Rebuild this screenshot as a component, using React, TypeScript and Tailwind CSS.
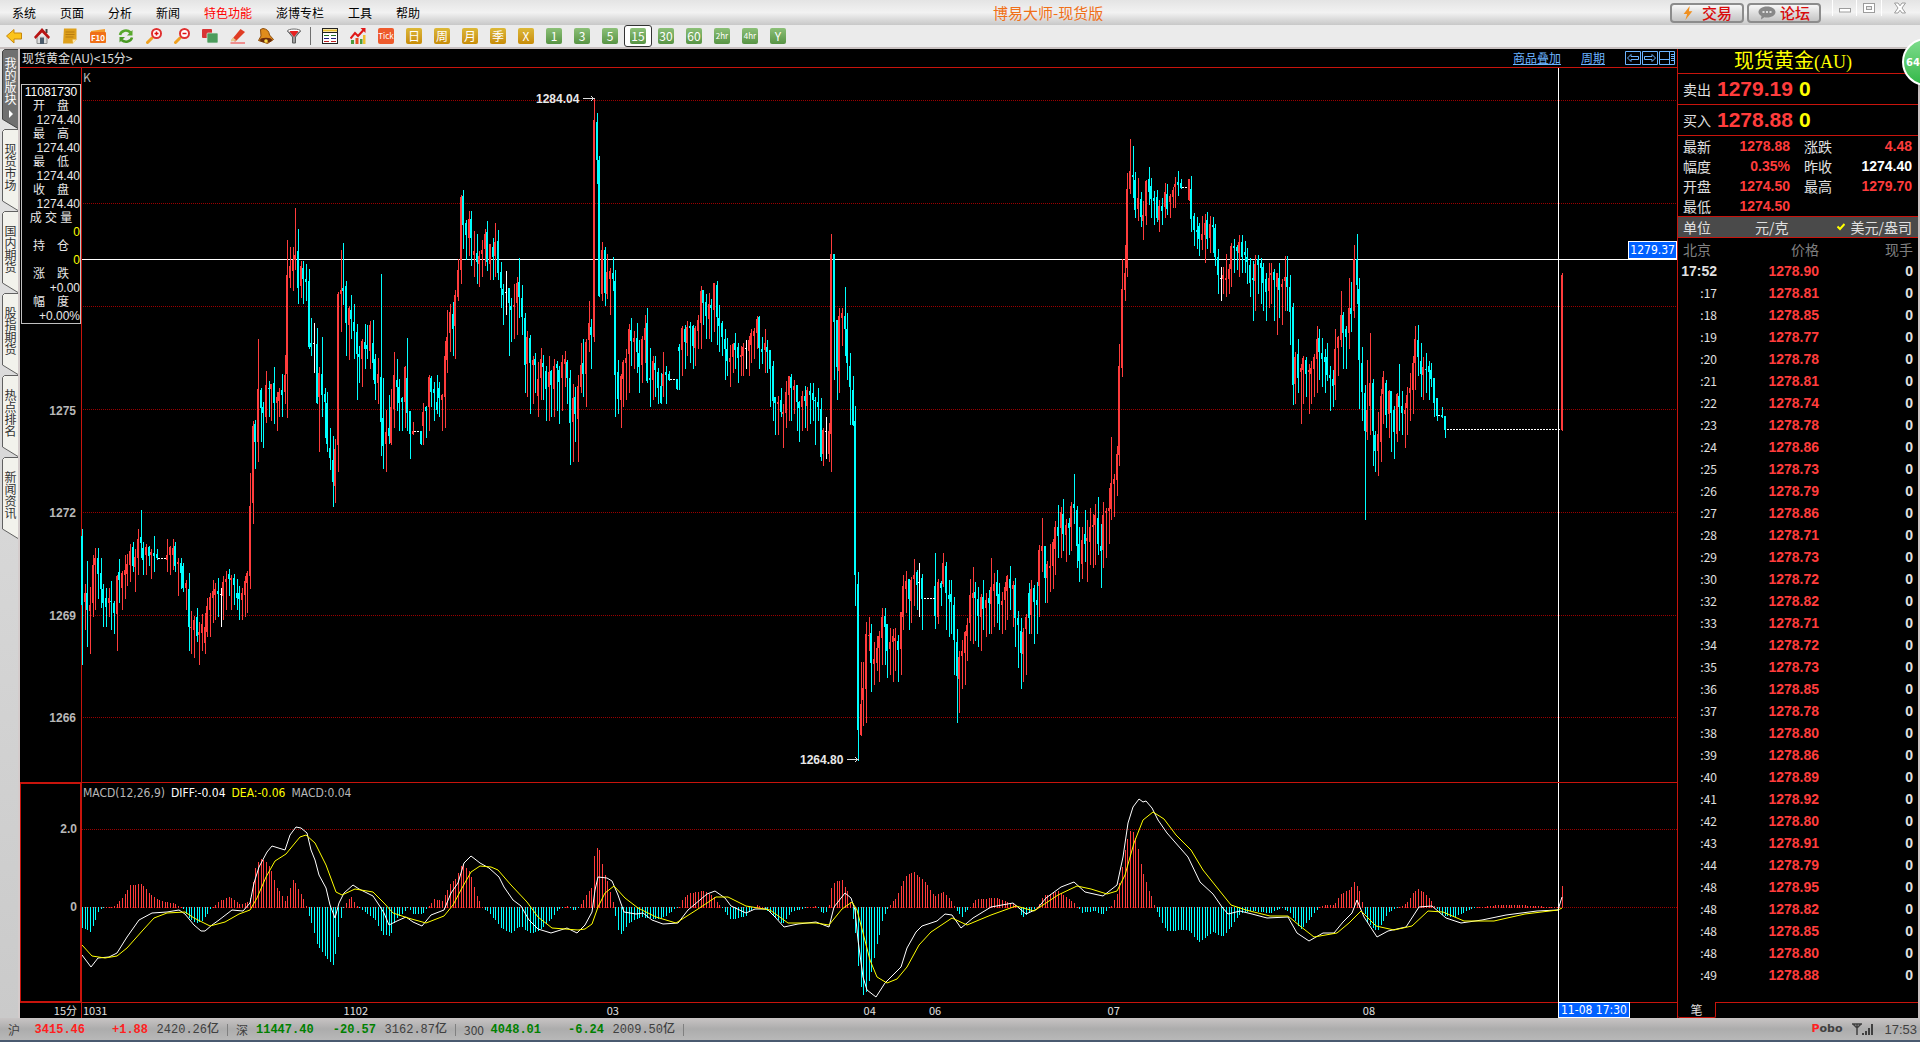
import type { ReactNode } from "react";
import clsx from "clsx";

const RED = "#ff3c3c";
const CYAN = "#00ffff";

const menus = ["系统", "页面", "分析", "新闻", "特色功能", "澎博专栏", "工具", "帮助"];

const sideTabs = ["我的版块", "现货市场", "国内期货", "股指期货", "热点排名", "新闻资讯"];

const periods = [
  { label: "Tick", tone: "red" },
  { label: "日", tone: "gold" },
  { label: "周", tone: "gold" },
  { label: "月", tone: "gold" },
  { label: "季", tone: "gold" },
  { label: "X", tone: "gold" },
  { label: "1", tone: "green" },
  { label: "3", tone: "green" },
  { label: "5", tone: "green" },
  { label: "15", tone: "green" },
  { label: "30", tone: "green" },
  { label: "60", tone: "green" },
  { label: "2hr", tone: "green" },
  { label: "4hr", tone: "green" },
  { label: "Y", tone: "green" },
];

const cursorInfo = [
  { label: "开　盘", value: "1274.40" },
  { label: "最　高", value: "1274.40" },
  { label: "最　低", value: "1274.40" },
  { label: "收　盘", value: "1274.40" },
  { label: "成 交 量", value: "0", yellow: true },
  { label: "持　仓", value: "0", yellow: true },
  { label: "涨　跌", value: "+0.00" },
  { label: "幅　度", value: "+0.00%" },
];

const ticks = [
  ["17:52", "1278.90"], [":17", "1278.81"], [":18", "1278.85"], [":19", "1278.77"],
  [":20", "1278.78"], [":21", "1278.81"], [":22", "1278.74"], [":23", "1278.78"],
  [":24", "1278.86"], [":25", "1278.73"], [":26", "1278.79"], [":27", "1278.86"],
  [":28", "1278.71"], [":29", "1278.73"], [":30", "1278.72"], [":32", "1278.82"],
  [":33", "1278.71"], [":34", "1278.72"], [":35", "1278.73"], [":36", "1278.85"],
  [":37", "1278.78"], [":38", "1278.80"], [":39", "1278.86"], [":40", "1278.89"],
  [":41", "1278.92"], [":42", "1278.80"], [":43", "1278.91"], [":44", "1278.79"],
  [":48", "1278.95"], [":48", "1278.82"], [":48", "1278.85"], [":48", "1278.80"],
  [":49", "1278.88"],
];

const indexes = [
  { name: "沪", price: "3415.46", change: "+1.88", amount: "2420.26亿", up: true },
  { name: "深", price: "11447.40", change: "-20.57", amount: "3162.87亿", up: false },
  { name: "300", price: "4048.01", change: "-6.24", amount: "2009.50亿", up: false },
];

// kind + x, high, body top, body bottom, low (r = up, d = down, w = flat)
const candleData = `
d82 529 536 605 664,r85 584 593 602 629,d87 561 593 610 646,r90 587 605 611 653,r93 555 565 603 616,r95 548 558 565 609,
d98 548 558 574 598,d101 558 573 589 607,d103 584 589 603 626,d106 588 598 607 626,r109 588 598 603 616,d111 581 601 602 629,
d114 601 603 613 633,r117 575 576 614 650,d119 559 572 580 602,r122 571 573 588 609,r125 555 570 575 598,r127 554 564 574 585,
r130 544 551 565 581,d133 542 547 566 571,r135 549 557 567 591,r138 529 539 558 574,d141 510 537 543 557,d143 542 548 560 574,
r146 544 547 555 574,d149 546 547 556 565,r151 549 552 555 578,d154 536 553 556 571,d157 549 554 558 559,r167 539 555 560 571,
r170 546 547 555 574,r173 539 548 555 569,d175 542 546 566 571,r178 558 562 564 595,d181 558 563 573 588,d183 563 566 588 591,
r186 580 583 588 609,d189 573 589 627 650,r191 611 627 628 653,r194 616 620 630 657,d197 608 617 636 641,r199 622 632 635 664,
r202 614 624 633 650,r205 613 627 643 653,r207 598 606 632 636,r210 593 597 610 636,r213 580 591 598 622,r215 583 589 595 619,
d218 578 591 594 616,w221 588 594 595 626,r223 576 582 596 619,r226 571 579 582 609,d229 569 574 579 595,r231 575 578 580 609,
d234 574 578 585 604,d237 579 593 598 609,d239 586 593 599 619,r242 588 593 600 619,r245 576 581 595 616,r247 571 573 583 612,
r250 473 506 576 588,r253 421 426 503 523,d255 420 424 442 468,r258 339 389 442 461,d261 388 390 408 441,d263 402 407 413 447,
r266 371 385 417 422,d269 381 388 389 416,r271 384 384 389 420,d274 367 383 403 423,r277 392 397 403 430,r279 388 392 401 416,
d282 374 390 395 416,r285 355 375 392 403,r287 240 275 374 417,r290 247 266 278 287,r293 247 260 271 290,r295 208 255 260 269,
d298 229 251 288 303,r301 261 266 286 297,d303 261 268 279 303,d306 264 279 282 300,d309 269 281 347 348,d311 318 343 347 355,
w314 323 343 344 372,d317 328 344 403 403,r319 367 373 397 451,d322 337 374 395 416,d325 388 394 402 437,d327 392 403 444 451,
d330 428 448 458 469,d333 436 460 482 506,r335 439 449 486 502,r338 292 294 445 471,r341 250 290 294 331,d343 243 288 291 304,
d346 281 286 323 355,r349 306 308 325 359,d351 295 310 319 338,d354 304 322 331 358,d357 324 332 354 399,d359 346 354 357 382,
r362 339 341 359 386,d365 324 342 349 368,d367 325 345 349 358,r370 321 325 351 368,d373 320 343 363 379,d375 354 359 384 399,
r378 358 374 383 403,d381 274 377 422 455,d383 378 418 446 468,r386 410 432 444 471,d389 395 428 436 443,r391 389 407 443 444,
r394 352 375 409 427,d397 359 380 387 410,d399 379 387 403 430,d402 397 398 402 430,r405 366 367 402 427,d407 338 378 413 430,
d410 411 411 434 458,r413 422 431 434 434,d421 431 431 444 444,r423 403 412 426 444,d426 406 407 411 437,r429 375 377 407 430,
d431 376 378 392 406,d434 382 389 393 420,d437 375 402 410 413,d439 382 388 398 416,r442 394 395 400 430,r445 341 356 397 427,
r447 310 337 360 372,r450 304 312 333 351,d453 302 314 329 355,r455 290 295 326 358,r458 259 270 297 300,r461 195 197 270 283,
d463 190 196 225 248,d466 220 223 235 259,r469 211 219 238 255,d471 211 219 238 265,r474 231 251 255 276,d477 234 253 262 283,
r479 251 256 264 286,r482 240 250 254 276,r485 229 234 249 265,d487 221 232 262 270,r490 244 244 264 279,d493 238 247 257 279,
r495 223 242 256 276,d498 230 241 273 279,d501 262 272 288 307,d503 284 289 295 324,w506 271 292 293 314,d509 288 288 303 355,
d511 298 306 310 341,r514 284 305 307 338,r517 277 283 303 334,d519 258 282 297 317,d522 285 298 317 334,d525 313 318 365 392,
r527 331 337 364 396,d530 335 338 363 413,r533 356 360 365 403,d535 353 359 365 392,r538 362 379 396 416,r541 348 359 378 399,
d543 355 363 367 399,d546 366 371 389 420,r549 356 372 387 420,d551 370 371 385 416,r554 359 366 389 416,d557 361 364 368 410,
d559 366 370 382 423,r562 355 362 378 410,r565 351 359 364 386,d567 360 362 378 403,d570 370 378 423 464,r573 384 398 422 461,
d575 387 397 414 441,r578 375 386 419 461,r581 343 365 387 392,d583 339 363 374 396,r586 339 342 374 406,r589 301 323 340 351,
d591 319 327 335 368,r594 98 120 337 341,d597 113 122 160 183,d599 156 160 296 296,r602 242 250 294 300,d605 247 250 293 305,
r607 254 272 294 298,r610 268 271 279 314,d613 257 273 279 290,d615 270 281 375 416,d618 360 372 399 413,r621 374 376 400 427,
r623 360 362 379 406,r626 349 358 363 399,r629 324 329 354 392,d631 318 330 341 365,r634 331 338 342 368,d637 323 338 352 372,
d639 340 353 367 392,r642 336 339 365 382,r645 315 328 340 362,d647 308 323 381 382,d650 348 378 380 406,r653 356 361 380 399,
d655 356 363 370 396,d658 368 372 388 403,d661 373 386 403 403,r663 352 374 386 396,d666 366 372 375 403,d669 371 374 380 380,
d677 379 379 389 389,d679 344 347 351 389,r682 326 328 350 375,d685 325 329 342 368,r687 321 327 343 355,d690 322 326 328 362,
d693 325 326 346 368,r695 326 328 348 365,r698 315 320 331 348,r701 286 291 323 348,d703 290 290 303 324,d706 294 302 316 338,
r709 293 304 319 338,d711 299 305 308 341,r714 283 283 310 331,d717 281 285 317 344,d719 305 318 326 351,d722 321 323 337 355,
d725 329 339 349 379,d727 338 349 361 375,r730 345 358 362 386,r733 343 344 357 372,d735 333 343 350 368,d738 343 347 358 382,
r741 346 355 357 375,r743 343 347 356 375,w746 340 348 349 368,r749 336 340 351 375,r751 329 333 345 362,r754 328 331 336 358,
r757 316 319 333 348,d759 316 317 348 368,d762 337 349 352 363,r765 329 343 350 372,d767 340 347 352 372,d770 350 350 369 406,
d773 361 366 401 420,d775 397 397 403 434,r778 396 402 404 434,d781 388 400 412 416,r783 404 412 414 447,r786 381 392 413 427,
r789 376 376 395 420,d791 374 377 388 420,r794 380 386 390 413,d797 385 385 402 430,d799 401 402 408 441,r802 391 396 407 430,
d805 386 396 401 427,r807 387 390 406 430,d810 383 391 395 423,d813 383 393 400 420,d815 397 400 401 444,d818 388 402 407 420,
d821 398 409 457 460,r823 428 430 454 465,w826 417 431 432 458,r829 423 431 454 461,r831 234 254 434 471,d834 254 254 322 379,
d837 320 320 367 399,r839 308 316 371 392,r842 308 313 318 345,d845 287 316 329 355,d847 313 329 363 379,d850 353 366 387 424,
d853 376 390 425 425,d855 406 421 575 605,d858 572 584 730 760,r861 662 704 735 735,r863 662 688 700 725,r866 622 634 689 722,
r869 617 635 636 650,d871 624 633 663 691,r874 642 659 664 684,r877 636 648 663 670,r879 631 636 648 681,r882 608 617 638 664,
d885 608 616 627 664,d887 624 624 651 677,r890 628 642 649 674,r893 629 636 642 681,r895 628 638 641 670,d898 635 641 650 681,
r901 612 612 649 674,r903 575 586 617 629,r906 571 581 589 612,d909 579 579 599 629,r911 577 580 601 622,r914 559 575 579 605,
d917 570 572 585 609,w919 563 582 583 616,d922 574 578 599 629,d935 553 586 616 628,r938 579 582 617 623,d941 581 583 588 605,
r943 553 563 584 586,d946 562 566 593 629,d949 580 595 599 636,d951 580 594 602 633,d954 597 605 640 674,d957 629 642 676 722,
r959 651 657 679 712,r962 640 651 656 688,r965 631 632 653 684,r967 618 625 636 660,r970 579 595 623 640,r973 567 593 598 643,
d975 582 592 598 640,d978 587 599 616 646,r981 594 597 617 650,d983 580 597 609 629,r986 593 600 608 636,d989 590 598 603 633,
r991 558 587 604 633,r994 573 584 591 626,d997 570 582 596 622,d999 583 594 604 629,r1002 592 601 605 633,r1005 582 587 600 629,
r1007 575 576 591 619,d1010 566 579 588 609,r1013 581 585 589 626,d1015 578 585 618 646,d1018 611 618 625 667,d1021 618 631 653 688,
r1023 628 632 654 681,r1026 614 617 629 674,d1029 583 593 618 633,r1031 580 589 615 633,d1034 585 588 602 643,d1037 582 600 605 633,
r1039 545 550 586 616,r1042 518 546 551 571,d1045 546 546 578 602,r1047 561 564 578 602,r1050 544 566 568 591,r1053 539 542 566 588,
r1055 521 527 549 574,d1058 505 527 536 557,r1061 507 512 528 557,d1063 499 514 534 550,r1066 519 525 535 561,d1069 518 523 528 554,
r1071 502 506 527 550,d1074 474 504 508 523,d1077 506 510 546 567,d1079 527 544 561 581,r1082 527 540 564 578,d1085 510 534 544 561,
r1087 520 538 541 581,r1090 508 527 542 564,r1093 514 525 527 567,r1095 504 515 525 564,d1098 497 518 544 554,d1101 524 546 551 587,
r1103 502 515 550 567,r1106 508 511 513 557,r1109 488 508 511 543,r1111 437 483 509 519,r1114 474 479 484 516,r1117 446 454 480 495,
r1119 344 366 455 465,r1122 259 289 368 376,r1125 245 273 290 300,r1127 173 189 268 276,r1130 139 171 189 193,d1133 146 175 177 197,
d1135 172 180 210 217,r1138 178 198 209 220,d1141 192 199 217 226,r1143 201 215 221 239,r1146 180 181 216 224,d1149 167 179 192 204,
d1151 178 186 199 217,d1154 191 198 201 224,d1157 190 197 218 221,r1159 200 206 220 231,d1162 198 206 211 224,r1165 183 192 207 217,
d1167 184 194 209 214,r1170 194 196 202 217,r1173 187 190 197 207,r1175 177 184 187 207,d1178 171 182 185 195,d1181 179 183 188 188,
r1189 179 179 200 200,d1191 176 189 219 231,d1194 213 216 230 245,d1197 217 230 232 248,d1199 223 226 239 255,r1202 216 234 240 249,
r1205 214 223 235 262,d1207 212 220 239 248,r1210 216 224 238 252,d1213 217 225 227 252,d1215 224 228 257 265,d1218 249 257 275 293,
w1221 267 278 279 300,r1223 267 275 279 293,r1226 254 278 280 296,r1229 264 269 279 293,r1231 243 246 269 286,d1234 239 246 248 272,
d1237 245 247 251 269,r1239 235 242 253 276,d1242 235 242 257 272,d1245 241 252 255 272,d1247 248 257 262 283,d1250 258 265 283 296,
d1253 261 278 280 320,r1255 255 264 281 310,d1258 255 259 265 293,d1261 258 263 268 303,d1263 263 267 283 310,d1266 273 279 292 320,
r1269 263 278 291 307,r1271 263 273 275 303,d1274 269 272 280 320,r1277 273 273 287 334,d1279 263 278 290 317,r1282 279 284 287 324,
r1285 256 277 281 310,d1287 256 277 287 310,d1290 275 287 312 344,d1293 303 307 385 404,r1295 352 357 384 403,d1298 339 354 378 392,
r1301 364 368 372 423,r1303 356 358 370 403,d1306 357 360 374 396,r1309 364 370 372 413,r1311 361 368 374 403,r1314 354 357 369 396,
r1317 326 339 359 392,d1319 329 338 352 379,d1322 338 353 359 386,d1325 349 357 362 392,d1327 343 357 375 380,d1330 366 375 378 410,
d1333 370 379 386 406,r1335 329 349 385 399,r1338 336 337 348 375,r1341 291 315 340 346,d1343 312 315 333 368,d1346 326 329 337 368,
r1349 278 308 333 348,d1351 282 308 314 331,r1354 245 259 311 317,d1357 234 259 285 303,d1359 278 289 360 408,d1362 347 363 392 420,
d1365 385 393 431 519,r1367 360 410 432 439,r1370 333 383 406 434,d1373 379 383 431 465,d1375 431 435 451 471,r1378 412 434 451 475,
r1381 389 396 442 461,r1383 371 377 394 423,d1386 380 383 415 427,r1389 390 391 414 437,d1391 391 391 413 451,d1394 406 410 432 458,
r1397 393 394 434 441,d1399 364 396 407 430,d1402 391 406 413 434,r1405 403 410 414 447,r1407 387 395 408 434,r1410 373 388 393 420,
r1413 356 363 390 413,r1415 326 339 363 389,d1418 325 340 357 375,d1421 343 361 374 396,r1423 357 367 375 399,d1426 353 369 370 392,
d1429 361 366 372 399,d1431 363 370 379 386,d1434 378 378 403 416,d1437 398 398 416 420,d1442 407 415 417 417,d1445 416 416 430 437,
r1562 273 275 430 430`;

const candles = candleData
  .trim()
  .split(/,\s*/)
  .map((row) => {
    const [x, high, top, bottom, low] = row.slice(1).split(" ").map(Number);
    return { kind: row[0], x, high, top, bottom, low };
  });

const flats = [
  [158, 166, 558],
  [414, 420, 431],
  [670, 676, 379],
  [924, 935, 598],
  [1182, 1188, 187],
  [1438, 1441, 415],
  [1447, 1560, 429],
];

const gridLines = [100, 203, 306, 409, 512, 615, 717];

// x:height anchors of the MACD histogram, negative values hang below zero
const histogram =
  "82:-21 91:-25 95:-13 99:-3 107:0 115:2 125:14 130:23 141:24 152:12 161:7 172:5 181:1 188:-10 196:-17 203:-13 211:-1 219:7 230:11 241:3 248:7 251:12 255:40 260:50 268:45 277:20 285:7 293:28 301:14 307:0 310:-13 318:-40 328:-53 333:-58 338:-30 342:-5 344:3 351:11 358:0 366:-6 375:-13 383:-28 390:-29 395:-13 404:-5 408:0 413:-7 422:-7 428:0 433:9 442:7 450:24 456:30 462:44 469:37 477:12 482:0 491:-8 502:-22 511:-26 520:-19 531:-27 540:-23 551:-12 558:-3 567:2 574:-4 579:0 585:12 591:20 594:52 598:62 603:40 609:20 614:2 616:-20 621:-27 629:-16 641:-10 656:-12 665:-10 674:-2 679:0 683:10 690:15 704:17 713:12 721:0 731:-13 746:-9 752:-2 756:3 764:-1 773:-9 782:-17 791:-5 804:-1 816:2 822:-6 828:-5 831:20 835:26 842:28 849:12 852:-5 856:-33 859:-72 864:-92 870:-70 874:-51 878:-33 882:-14 888:0 897:12 905:32 914:36 925:26 934:12 943:16 949:10 955:0 961:-11 969:0 976:9 997:10 1007:6 1017:2 1022:-11 1031:-4 1037:0 1043:12 1058:17 1067:10 1075:4 1082:-6 1094:-4 1102:-8 1110:0 1117:14 1122:41 1128:74 1132:79 1137:64 1143:34 1152:9 1155:0 1160:-13 1167:-24 1188:-23 1199:-35 1213:-25 1222:-30 1231:-20 1240:-6 1252:-4 1270:-6 1282:-1 1291:-7 1300:-23 1309:-13 1319:0 1325:3 1334:3 1340:14 1349:18 1355:27 1361:12 1363:0 1367:-15 1377:-25 1388:-5 1397:-1 1406:5 1417:20 1428:12 1435:0 1443:-9 1455:-10 1470:-2 1482:1 1497:3 1518:3 1549:1 1559:1 1562:22"
    .split(" ")
    .map((p) => p.split(":").map(Number));

function histogramAt(x: number) {
  const i = histogram.findIndex((p) => p[0] >= x);
  if (i <= 0) return histogram[0][1];
  const [x0, h0] = histogram[i - 1];
  const [x1, h1] = histogram[i];
  return Math.round(h0 + ((h1 - h0) * (x - x0)) / (x1 - x0));
}

const bars = Array.from({ length: 556 }, (_, i) => {
  const x = 82 + Math.round((i * 8) / 3);
  return { x, h: histogramAt(x) };
});

const diffLine =
  "82,955 91,967 98,958 109,957 117,953 127,937 139,920 152,913 167,912 179,910 185,914 194,925 201,931 205,931 212,925 219,920 232,910 243,911 250,903 254,883 259,867 267,852 272,846 285,850 290,835 296,827 301,828 307,833 311,850 315,860 319,875 326,888 330,905 335,918 339,903 344,893 353,885 359,889 373,896 379,905 384,913 389,925 397,921 406,917 413,922 422,926 431,915 444,910 451,893 458,883 464,863 471,856 480,863 489,868 499,877 504,887 513,900 521,906 529,920 538,929 551,933 567,928 577,933 585,925 592,912 595,890 598,877 607,878 612,881 618,895 624,912 636,914 643,913 652,920 663,924 678,923 688,910 707,894 715,891 725,898 731,906 746,913 755,909 767,909 775,917 784,927 798,924 816,922 829,927 834,907 845,893 851,898 855,910 858,940 863,977 867,990 876,997 885,983 901,967 907,948 916,932 922,926 937,921 945,914 952,915 961,928 973,918 991,907 1013,903 1026,914 1037,909 1046,898 1061,887 1074,882 1085,892 1103,896 1117,885 1123,857 1128,823 1133,807 1139,799 1143,802 1146,801 1152,808 1158,820 1167,833 1188,857 1200,882 1213,894 1222,907 1228,914 1240,911 1252,914 1267,918 1288,917 1297,933 1309,941 1323,933 1334,933 1343,922 1352,913 1357,900 1364,917 1377,937 1388,931 1406,927 1419,907 1432,906 1446,918 1461,923 1482,920 1506,915 1537,911 1558,910 1562,897";

const deaLine =
  "82,945 92,956 105,958 117,956 127,948 143,930 154,918 167,913 185,912 194,918 210,926 225,922 239,914 250,910 257,898 266,877 275,861 286,854 295,843 300,837 306,835 315,843 326,865 336,892 342,895 355,889 373,892 384,903 393,913 408,918 426,923 444,916 453,905 462,888 471,872 480,866 491,867 498,870 511,885 527,902 538,917 552,928 578,930 585,929 592,924 598,907 605,893 614,886 625,898 638,908 656,917 676,923 698,909 716,897 728,897 746,906 770,910 788,923 816,923 829,925 842,909 852,902 857,910 863,933 870,960 877,977 887,983 897,979 907,967 919,945 931,932 952,918 967,925 991,915 1016,906 1034,911 1058,895 1077,886 1091,889 1107,894 1117,891 1125,875 1134,843 1143,820 1153,812 1164,819 1176,835 1191,850 1203,870 1219,890 1231,905 1246,910 1270,916 1288,916 1300,926 1314,937 1337,933 1349,923 1361,911 1376,926 1394,930 1412,926 1428,911 1443,912 1464,921 1494,921 1525,914 1558,910 1562,908";

function Glyph({ children }: { children: ReactNode }) {
  return (
    <svg viewBox="0 0 16 16" className="h-4 w-4" aria-hidden="true">
      {children}
    </svg>
  );
}

const tools = [
  {
    name: "后退",
    art: (
      <path d="M0.5 8 8 1.5V5h7.5v6H8v4L0.5 8Z" fill="#fcc41c" stroke="#c8880c" />
    ),
  },
  {
    name: "首页",
    art: (
      <>
        <path d="M3 8v7.500h10V8" fill="#dcdcdc" stroke="#8c8c8c" />
        <path d="M11.500 1h2v4h-2z" fill="#444" />
        <path d="M0 9 8 0l8 9-1.500 2L8 4.500 1.500 11Z" fill="#b81414" />
        <path d="M6 9.500h4v6.500H6z" fill="#4a5a6a" />
      </>
    ),
  },
  {
    name: "便签",
    art: (
      <>
        <path d="M2 0.500h12.500v11L11 15.500H1Z" fill="#dea01c" />
        <path d="M14.500 11.500 11 15.500l-.5-4Z" fill="#fbe6ae" />
        <path d="M3.500 4h9M3.500 6.500h9M3.500 9h8" stroke="#b87c10" />
      </>
    ),
  },
  {
    name: "F10",
    art: (
      <>
        <path d="M1 3 15 1v3H1Z" fill="#f49c2c" />
        <rect x="0" y="4" width="16" height="11" rx="1" fill="#f07018" />
        <text x="8" y="13" textAnchor="middle" fontSize="8" fontWeight="bold" fill="#fff">F10</text>
      </>
    ),
  },
  {
    name: "刷新",
    art: (
      <>
        <path d="M2 7C3 2.500 9 1 12.500 4.500" fill="none" stroke="#58a82c" strokeWidth="2.500" />
        <path d="M14.500 2v5.500H9Z" fill="#58a82c" />
        <path d="M14 9.500C13 14 7 15 3.500 12" fill="none" stroke="#4a9a24" strokeWidth="2.500" />
        <path d="M1.500 14.500V9H7Z" fill="#4a9a24" />
      </>
    ),
  },
  {
    name: "放大",
    art: (
      <>
        <path d="M1.500 14.500 6 10" stroke="#f0a020" strokeWidth="3" strokeLinecap="round" />
        <circle cx="10.500" cy="5.500" r="4.500" fill="#fff" stroke="#e03030" strokeWidth="2" />
        <path d="M8.500 5.500h4M10.500 3.500v4" stroke="#e01010" strokeWidth="1.500" />
      </>
    ),
  },
  {
    name: "缩小",
    art: (
      <>
        <path d="M1.500 14.500 6 10" stroke="#f0a020" strokeWidth="3" strokeLinecap="round" />
        <circle cx="10.500" cy="5.500" r="4.500" fill="#fff" stroke="#e03030" strokeWidth="2" />
        <path d="M8.500 5.500h4" stroke="#e01010" strokeWidth="1.500" />
      </>
    ),
  },
  {
    name: "叠加",
    art: (
      <>
        <rect x="0" y="1" width="10" height="9" rx="1" fill="#d83434" />
        <rect x="5" y="5" width="11" height="10" rx="1" fill="#4c9c5c" stroke="#e0e8e0" strokeWidth=".7" />
      </>
    ),
  },
  {
    name: "画线",
    art: (
      <>
        <path d="M1 12.500 10.500 1l4.500 3-9.500 9.500Z" fill="#e03c24" />
        <path d="m1 12.500 2-3 3.500 3L1 13.500Z" fill="#e8c88c" />
        <path d="M0.500 15h14.500" stroke="#f07070" strokeWidth="1.500" />
      </>
    ),
  },
  {
    name: "预警",
    art: (
      <>
        <path d="M2.500 1.500 5 .5c4 .5 6 2.500 6.500 6.500l4 4.500-6 4-9-3L3 8Z" fill="#e08c1c" stroke="#8c4c0c" />
        <ellipse cx="8" cy="12" rx="6" ry="2.300" fill="#6c2c0c" />
        <circle cx="8" cy="13" r="1.800" fill="#fcdc4c" />
      </>
    ),
  },
  {
    name: "筛选",
    art: (
      <>
        <path d="M1.500 3 6.500 9v6h3V9l5-6Z" fill="#9c9c9c" stroke="#5c5c5c" />
        <ellipse cx="8" cy="3" rx="6.500" ry="2" fill="#fff" stroke="#6c6c6c" />
        <path d="M3.500 3h9L8 9Z" fill="#e82020" />
      </>
    ),
  },
];

const chartTools = [
  {
    name: "报价",
    art: (
      <>
        <rect x=".5" y=".5" width="15" height="15" fill="#fff" stroke="#222" />
        <path d="M1 2.500h14" stroke="#e8c030" strokeWidth="2" />
        <path d="M0 4.500h16" stroke="#222" />
        <path d="M2 7.500h5M9 7.500h5" stroke="#207020" />
        <path d="M2 10.500h5M9 10.500h5" stroke="#202080" />
        <path d="M2 13.500h5M9 13.500h5" stroke="#c02020" />
      </>
    ),
  },
  {
    name: "走势",
    art: (
      <>
        <path d="M1 16v-4h3v4Z" fill="#4c9c3c" />
        <path d="M5.500 16v-6h3v6Z" fill="#e84c24" />
        <path d="M10 16v-5h2.500v5Z" fill="#4c9c3c" />
        <path d="M13 16V7h2.500v9Z" fill="#f0c030" />
        <path d="M0.500 10.500 5 5l3 3 5.500-6" fill="none" stroke="#e01818" strokeWidth="2" />
        <path d="M10.500 0h5v5Z" fill="#e01818" />
      </>
    ),
  },
];

function TitleBar() {
  return (
    <header className="relative flex h-[25px] shrink-0 items-center bg-linear-to-b from-[#e4e4e4] via-[#f2f2f2] to-[#c8c8c8]">
      <nav className="flex gap-6 pl-3 text-xs">
        {menus.map((item) => (
          <button
            key={item}
            type="button"
            className={clsx("whitespace-nowrap", item === "特色功能" ? "text-[#ff0000]" : "text-black")}
          >
            {item}
          </button>
        ))}
      </nav>
      <h1 className="absolute left-[993px] text-[15px] leading-6 text-[#f07018]">博易大师-现货版</h1>
      <div className="ml-auto flex items-center gap-[3px] pr-[3px]">
        <button
          type="button"
          className="flex h-5 w-[74px] items-center justify-center gap-2 rounded-sm border-2 border-[#8c8c8c] bg-linear-to-b from-[#f8f8f8] to-[#c4c4c4] text-[15px] leading-4 font-medium text-[#d80c0c]"
        >
          <svg viewBox="0 0 12 16" className="h-[14px] w-3" aria-hidden="true">
            <path d="M8 0 1 9h4L3 16l8-10H7Z" fill="#f09020" />
          </svg>
          交易
        </button>
        <button
          type="button"
          className="flex h-5 w-[74px] items-center justify-center gap-1 rounded-sm border-2 border-[#8c8c8c] bg-linear-to-b from-[#f8f8f8] to-[#c4c4c4] text-[15px] leading-4 font-medium text-[#d80c0c]"
        >
          <svg viewBox="0 0 18 14" className="h-[14px] w-[18px]" aria-hidden="true">
            <path d="M9 0.500c5 0 8.500 2.500 8.500 5.500S14 11.500 9 11.500c-1 0-2-.1-2.700-.3L3 13.500l.5-3.500C1.700 9 .5 7.700.5 6 .5 3 4 .5 9 .5Z" fill="#888" />
            <path d="M4.500 5h2v2h-2zM8 5h2v2H8zM11.500 5h2v2h-2z" fill="#ddd" />
          </svg>
          论坛
        </button>
        <div className="flex h-[25px] pl-2">
          <button type="button" aria-label="最小化" className="flex h-4 w-6 items-center justify-center border-l border-white">
            <svg viewBox="0 0 12 12" className="h-3 w-3">
              <rect x=".5" y="6.500" width="11" height="3.500" fill="#fff" stroke="#9c9c9c" />
            </svg>
          </button>
          <button type="button" aria-label="最大化" className="flex h-4 w-[25px] items-center justify-center border-l border-white">
            <svg viewBox="0 0 12 12" className="h-3 w-3">
              <rect x=".5" y="1.500" width="11" height="9" fill="#fff" stroke="#9c9c9c" />
              <rect x="3.500" y="4.500" width="5" height="3" fill="#e8e8e8" stroke="#9c9c9c" />
            </svg>
          </button>
          <button type="button" aria-label="关闭" className="flex h-4 w-9 items-center justify-center border-l border-white">
            <svg viewBox="0 0 12 12" className="h-3 w-3">
              <path d="M.5 1h3.500l2 2.800L8 1h3.500L8 6l3.500 5H8L6 8.200 4 11H.5L4 6Z" fill="#fff" stroke="#9c9c9c" />
            </svg>
          </button>
        </div>
      </div>
    </header>
  );
}

function ToolBar() {
  return (
    <div className="flex h-6 shrink-0 items-stretch border-b-2 border-[#c8c0c0] bg-[#ebebeb]">
      {tools.map((tool) => (
        <button key={tool.name} type="button" aria-label={tool.name} className="flex w-7 items-center justify-center">
          <Glyph>{tool.art}</Glyph>
        </button>
      ))}
      <div className="my-[2px] mr-[5px] ml-[2px] w-px bg-[#707070]" />
      {chartTools.map((tool) => (
        <button key={tool.name} type="button" aria-label={tool.name} className="flex w-7 items-center justify-center">
          <Glyph>{tool.art}</Glyph>
        </button>
      ))}
      {periods.map((p) => (
        <button
          key={p.label}
          type="button"
          className={clsx(
            "flex w-7 items-center justify-center",
            p.label === "15" && "rounded-[3px] border border-[#333] bg-white",
          )}
        >
          <span
            className={clsx(
              "flex h-4 w-4 items-center justify-center rounded-xs leading-4 text-white",
              p.label.length > 2 ? "text-[8px]" : "text-xs",
              p.tone === "red" && "bg-[#ee5a2c]",
              p.tone === "gold" && "bg-linear-to-b from-[#dcb838] to-[#c88c04]",
              p.tone === "green" && "bg-linear-to-b from-[#8cc078] to-[#589444]",
            )}
          >
            {p.label}
          </span>
        </button>
      ))}
    </div>
  );
}

function SideTabs() {
  return (
    <nav className="w-5 shrink-0 border-r-2 border-[#d4cccc] bg-linear-to-b from-[#e4e4e4] to-[#cacaca]">
      {sideTabs.map((tab, i) => (
        <button
          key={tab}
          type="button"
          className={clsx(
            "relative flex w-full flex-col items-center pl-[3px]",
            i === 0 ? "h-20 pt-2 text-white" : "h-[82px] pt-[14px] text-[#333]",
          )}
        >
          <svg viewBox="0 0 18 82" preserveAspectRatio="none" className="absolute inset-0 h-full w-full" aria-hidden="true">
            <path
              d="M18 .5H4.500L2.500 2.500V72L18 81.500"
              fill={i === 0 ? "#707070" : "#f2f2ec"}
              stroke={i === 0 ? "#404040" : "#606060"}
            />
          </svg>
          <span className="relative w-3 text-xs leading-3 break-all">{tab}</span>
          {i === 0 && (
            <svg viewBox="0 0 4 8" className="relative mt-[5px] h-2 w-1" aria-hidden="true">
              <path d="M0 0v8l4-4Z" fill="#fff" />
            </svg>
          )}
        </button>
      ))}
    </nav>
  );
}

function CursorBox() {
  return (
    <div className="absolute top-4 right-0 left-px z-10 border border-[#c0c0c0] bg-black font-['Liberation_Sans','Noto_Sans_CJK_SC',sans-serif] text-xs leading-[14px] font-normal text-[#e8e8e8]">
      <p className="text-center text-white">11081730</p>
      <dl>
        {cursorInfo.map((row) => (
          <div key={row.label}>
            <dt className="text-center">{row.label}</dt>
            <dd className={clsx("text-right", row.yellow && "text-[#ffff00]")}>{row.value}</dd>
          </div>
        ))}
      </dl>
    </div>
  );
}

function PricePane() {
  return (
    <div className="flex min-h-0 flex-[714] border-b border-[#c8140c]">
      <div className="relative w-[62px] shrink-0 border-r border-[#c8140c] text-right font-['Liberation_Sans',sans-serif] text-xs font-bold text-[#b8b8b8]">
        <CursorBox />
        <span className="absolute top-[47%] right-[5px] -mt-px">1275</span>
        <span className="absolute top-[61%] right-[5px] mt-px">1272</span>
        <span className="absolute top-[76%] right-[5px] -mt-[3px]">1269</span>
        <span className="absolute top-[90%] right-[5px] -mt-px">1266</span>
      </div>
      <div className="relative min-w-0 flex-1">
        <svg
          viewBox="82 68 1595 714"
          preserveAspectRatio="none"
          shapeRendering="crispEdges"
          className="absolute inset-0 h-full w-full overflow-visible"
          role="img"
          aria-label="15分钟K线"
        >
          {gridLines.map((y) => (
            <path key={y} d={`M83 ${y}.5H1677`} stroke="#9c0000" strokeDasharray="1 1" />
          ))}
          <path d="M82 259.500H1677" stroke="#fff" />
          {candles.map((c) => (
            <g key={c.x} fill={c.kind === "r" ? RED : c.kind === "d" ? CYAN : "#fff"}>
              <rect x={c.x} y={c.high} width="1" height={c.low - c.high + 1} />
              <rect x={c.x - 1} y={c.top} width="2" height={Math.max(1, c.bottom - c.top)} />
            </g>
          ))}
          {flats.map(([x0, x1, y]) => (
            <path key={x0} d={`M${x0} ${y}.5H${x1}`} stroke="#fff" strokeDasharray="2 1" />
          ))}
          <path d="M1558.500 68V782" stroke="#fff" />
          <path d="M583 98.500h11M591 96.500l3 2-3 2M847 759.500h11M855 757.500l3 2-3 2" fill="none" stroke="#ddd" />
        </svg>
        <span className="absolute top-px left-px text-xs text-[#b8b8b8]">K</span>
        <span className="absolute top-[23px] left-[454px] font-['Liberation_Sans',sans-serif] text-xs leading-4 font-bold text-[#e8e8e8]">
          1284.04
        </span>
        <span className="absolute bottom-[14px] left-[718px] font-['Liberation_Sans',sans-serif] text-xs leading-4 font-bold text-[#e8e8e8]">
          1264.80
        </span>
        <span className="absolute top-[173px] right-0 border border-white bg-[#0060ff] px-px font-['DejaVu_Sans_Condensed','DejaVu_Sans',sans-serif] text-xs leading-4 text-white">
          1279.37
        </span>
      </div>
    </div>
  );
}

function MacdPane() {
  return (
    <div className="flex min-h-0 flex-[219] border-b border-[#c8140c]">
      <div className="relative w-[62px] shrink-0 border border-r-2 border-[#c8140c] font-['Liberation_Sans',sans-serif] text-xs font-bold text-[#b8b8b8]">
        <span className="absolute top-[37px] right-[3px]">2.0</span>
        <span className="absolute top-[115px] right-[3px]">0</span>
      </div>
      <div className="relative min-w-0 flex-1">
        <svg
          viewBox="82 783 1595 219"
          preserveAspectRatio="none"
          className="absolute inset-0 h-full w-full"
          role="img"
          aria-label="MACD"
        >
          <path d="M82 829.500H1677M82 907.500H1677" stroke="#9c0000" strokeDasharray="1 1" shapeRendering="crispEdges" />
          <g shapeRendering="crispEdges">
            {bars.map((b) => (
              <rect
                key={b.x}
                x={b.x}
                y={b.h > 0 ? 908 - b.h : 907}
                width="1"
                height={Math.max(1, Math.abs(b.h))}
                fill={b.h >= 0 ? RED : CYAN}
              />
            ))}
          </g>
          <polyline points={diffLine} fill="none" stroke="#fff" />
          <polyline points={deaLine} fill="none" stroke="#ffff00" />
          <path d="M1558.500 783V1002" stroke="#fff" shapeRendering="crispEdges" />
        </svg>
        <p className="absolute top-[2px] left-px flex gap-[6px] font-['DejaVu_Sans_Condensed','DejaVu_Sans',sans-serif] text-xs leading-4 whitespace-nowrap text-[#b8b8b8]">
          <span>MACD(12,26,9)</span>
          <span className="text-white">DIFF:-0.04</span>
          <span className="text-[#ffff00]">DEA:-0.06</span>
          <span>MACD:0.04</span>
        </p>
      </div>
    </div>
  );
}

function TimeAxis() {
  return (
    <div className="flex h-[15px] shrink-0 text-[11px] leading-[14px] text-[#e0e0e0]">
      <div className="w-[62px] shrink-0 border-r border-[#c8140c] pr-1 text-right">15分</div>
      <div className="relative flex-1">
        <span className="absolute left-px">1031</span>
        <span className="absolute left-[16.4%]">1102</span>
        <span className="absolute left-[32.9%]">03</span>
        <span className="absolute left-[49%]">04</span>
        <span className="absolute left-[53.1%]">06</span>
        <span className="absolute left-[64.3%]">07</span>
        <span className="absolute left-[80.3%]">08</span>
        <span className="absolute -top-px left-[1476px] border border-white bg-[#0060ff] px-[2px] font-['DejaVu_Sans_Condensed','DejaVu_Sans',sans-serif] text-xs leading-[14px] text-white">
          11-08 17:30
        </span>
      </div>
    </div>
  );
}

function Chart() {
  return (
    <main className="flex min-w-0 flex-1 flex-col bg-black">
      <div className="flex h-[19px] shrink-0 items-center border-b border-[#c8140c] pr-[2px] pl-[2px] text-xs">
        <h2 className="text-[#e0e0e0]">现货黄金(AU)&lt;15分&gt;</h2>
        <div className="ml-auto flex items-center gap-5 text-[#6cb4ff]">
          <a href="#overlay" className="underline">商品叠加</a>
          <a href="#period" className="underline">周期</a>
          <div className="flex gap-px">
            <button type="button" aria-label="左移">
              <svg viewBox="0 0 16 14" className="h-[14px] w-4" fill="none" stroke="currentColor">
                <path d="M.5.5h15v13H.5zM2.500 7 6 3.500v2h7.500v3H6v2Z" />
              </svg>
            </button>
            <button type="button" aria-label="右移">
              <svg viewBox="0 0 16 14" className="h-[14px] w-4" fill="none" stroke="currentColor">
                <path d="M.5.5h15v13H.5zM13.500 7 10 3.500v2H2.500v3H10v2Z" />
              </svg>
            </button>
            <button type="button" aria-label="布局">
              <svg viewBox="0 0 16 14" className="h-[14px] w-4" fill="none" stroke="currentColor">
                <path d="M.5.5h15v13H.5zM.5 8.500h10M10.500.5v13M12 3.500h3M12 5.500h3M12 7.500h3M12 9.500h3" />
              </svg>
            </button>
          </div>
        </div>
      </div>
      <PricePane />
      <MacdPane />
      <TimeAxis />
    </main>
  );
}

function BigQuote({ label, price }: { label: string; price: string }) {
  return (
    <div className="flex h-[31px] items-center border-b border-[#c8140c] pl-[5px]">
      <span className="w-[34px] text-sm">{label}</span>
      <span className="font-['Liberation_Sans',sans-serif] text-[21px] font-bold text-[#ff3c3c]">{price}</span>
      <span className="ml-[6px] font-['Liberation_Sans',sans-serif] text-[21px] font-bold text-[#ffff00]">0</span>
    </div>
  );
}

const details = [
  ["最新", "1278.88", "涨跌", "4.48"],
  ["幅度", "0.35%", "昨收", "1274.40"],
  ["开盘", "1274.50", "最高", "1279.70"],
  ["最低", "1274.50", "", ""],
];

function QuotePanel() {
  return (
    <aside className="flex w-[243px] shrink-0 flex-col border-r-2 border-l border-r-[#c8c0c0] border-l-[#c8140c] bg-black text-sm text-[#e0e0e0]">
      <h2 className="h-[25px] border-b border-[#c8140c] pl-14 font-['Liberation_Serif','Noto_Sans_CJK_SC',serif] text-[20px] leading-6 whitespace-nowrap text-[#ffff00]">
        现货黄金<span className="text-[18px]">(AU)</span>
      </h2>
      <BigQuote label="卖出" price="1279.19" />
      <BigQuote label="买入" price="1278.88" />
      <table className="w-full table-fixed">
        <tbody>
          {details.map(([a, av, b, bv]) => (
            <tr key={a} className="h-5">
              <th scope="row" className="w-10 p-0 pl-[5px] text-left leading-5 font-normal">{a}</th>
              <td className="w-[72px] p-0 text-right font-['Liberation_Sans',sans-serif] leading-5 font-bold text-[#ff3c3c]">{av}</td>
              <th scope="row" className="w-[50px] p-0 pl-[14px] text-left leading-5 font-normal">{b}</th>
              <td
                className={clsx(
                  "p-0 pr-[6px] text-right font-['Liberation_Sans',sans-serif] leading-5 font-bold",
                  b === "昨收" ? "text-white" : "text-[#ff3c3c]",
                )}
              >
                {bv}
              </td>
            </tr>
          ))}
        </tbody>
      </table>
      <div className="flex h-[22px] items-center border-y border-[#c8140c] bg-[#4a4a4a] pr-[6px] pl-[5px]">
        <span>单位</span>
        <span className="ml-11">元/克</span>
        <svg viewBox="0 0 8 8" className="mr-[6px] ml-auto h-2 w-2" aria-hidden="true">
          <path d="M.5 3.500 3 6l4.500-5" fill="none" stroke="#ff0" strokeWidth="2" />
        </svg>
        <span>美元/盎司</span>
      </div>
      <table className="w-full table-fixed">
        <thead>
          <tr className="h-[22px] leading-5 text-[#808080]">
            <th className="w-[39px] p-0 pl-[5px] text-left font-normal whitespace-nowrap">北京</th>
            <th className="w-[102px] p-0 text-right font-normal">价格</th>
            <th className="p-0 pr-[5px] text-right font-normal">现手</th>
          </tr>
        </thead>
        <tbody className="font-['Liberation_Sans',sans-serif] leading-5 font-bold">
          {ticks.map(([time, price], i) => (
            <tr key={i} className="h-[22px]">
              <td
                className={clsx(
                  "p-0 text-right whitespace-nowrap",
                  i > 0 && "font-['Noto_Sans_CJK_SC',sans-serif] text-xs font-normal",
                )}
              >
                {time}
              </td>
              <td className="p-0 text-right text-[#ff3c3c]">{price}</td>
              <td className="p-0 pr-[5px] text-right">0</td>
            </tr>
          ))}
        </tbody>
      </table>
      <div className="mt-auto flex h-4 text-xs">
        <button type="button" className="w-[38px] rounded-b-xs border-r border-b border-[#c8140c] leading-[14px]">
          笔
        </button>
        <div className="flex-1 border-t border-[#c8140c]" />
      </div>
    </aside>
  );
}

function StatusBar() {
  return (
    <footer className="flex h-6 shrink-0 items-center border-b-2 border-[#4a5a70] bg-linear-to-b from-[#c8c4c4] via-[#acacac] to-[#b8b8b8] pt-px font-['Liberation_Mono','Noto_Sans_CJK_SC',monospace] text-xs text-[#404040]">
      {indexes.map((item) => (
        <div key={item.name} className="flex w-[228px] items-center pl-2">
          <span className="w-5 font-['Noto_Sans_CJK_SC',sans-serif]">{item.name}</span>
          <span className={clsx("w-[57px] text-right font-bold", item.up ? "text-[#ff2020]" : "text-[#008000]")}>
            {item.price}
          </span>
          <span className={clsx("w-[63px] text-right font-bold", item.up ? "text-[#ff2020]" : "text-[#008000]")}>
            {item.change}
          </span>
          <span className="w-[71px] text-right font-medium">{item.amount}</span>
          <span className="ml-2 h-3 w-px bg-[#808080]" />
        </div>
      ))}
      <div className="ml-auto flex items-center pr-[3px]">
        <span className="font-['DejaVu_Sans',sans-serif] text-[11px] font-bold">
          <span className="text-[#ff2020]">P</span>obo
        </span>
        <svg viewBox="0 0 21 12" className="mr-[11px] ml-[10px] h-3 w-[21px]" fill="none" stroke="#404040" strokeWidth="1.500" aria-hidden="true">
          <path d="M0 1h10M1 1l4 4 4-4M5 1v11" />
          <path d="M11 12v-2M14 12V8M17 12V5M20 12V1" strokeWidth="2" />
        </svg>
        <time className="font-['Liberation_Sans',sans-serif] text-[13px]">17:53</time>
      </div>
    </footer>
  );
}

export default function App() {
  return (
    <div className="relative flex h-screen flex-col overflow-hidden bg-[#d4d4d4] font-['Noto_Sans_CJK_SC',sans-serif]">
      <TitleBar />
      <ToolBar />
      <div className="flex min-h-0 flex-1">
        <SideTabs />
        <Chart />
        <QuotePanel />
      </div>
      <StatusBar />
      {/* floating speed ball, half off screen */}
      <div className="absolute top-[38px] -right-[30px] z-20 flex h-12 w-12 items-center rounded-full border-2 border-white bg-linear-to-b from-[#7cdc8c] to-[#30b848] pl-[2px] font-['DejaVu_Sans',sans-serif] text-[10px] font-bold text-white shadow-md">
        64
      </div>
    </div>
  );
}
